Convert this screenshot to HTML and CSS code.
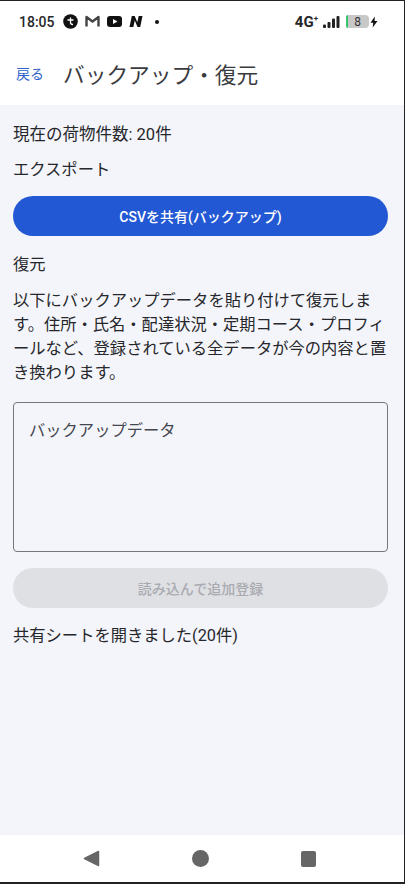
FILE: index.html
```html
<!DOCTYPE html>
<html lang="ja">
<head>
<meta charset="UTF-8">
<meta name="viewport" content="width=device-width, initial-scale=1.0">
<title>バックアップ・復元</title>
<link rel="stylesheet" href="styles.css">
</head>
<body>
<div class="phone">
<div class="status-bar">
<div class="status-left">
<span class="clock">18:05</span>
<svg class="st-icon" width="15" height="15" viewBox="0 0 15 15"><circle cx="7.500" cy="7.500" r="7.300" fill="#111"/><path d="M4.500 6h6M7.500 3.500v5q0 2 2.500 2" fill="none" stroke="#fff" stroke-width="1.300"/></svg>
<svg class="st-icon" width="15" height="13" viewBox="0 0 15 13"><path d="M1.500 11.500V2l6 4.500 6-4.500v9.500" fill="none" stroke="#444" stroke-width="2.400" stroke-linejoin="round"/></svg>
<svg class="st-icon" width="15" height="11" viewBox="0 0 15 11"><rect width="15" height="11" rx="3" fill="#111"/><path d="M6 3l4.500 2.500L6 8z" fill="#fff"/></svg>
<svg class="st-icon" width="14" height="13" viewBox="0 0 14 12"><path d="M.5 11.500 2.800.5h2.900L8.300 6.800 9.700.5H13.500L11.200 11.500H8.500L5.800 5 4.300 11.500z" fill="#111"/></svg>
<span class="dot"></span>
</div>
<div class="status-right">
<span class="net">4G<sup>+</sup></span>
<svg class="signal" width="17" height="12" viewBox="0 0 17 12" fill="#222"><rect x="0" y="8.500" width="3" height="3.500" rx="1"/><rect x="4.500" y="6" width="3" height="6" rx="1"/><rect x="9" y="2.500" width="3" height="9.500" rx="1"/><rect x="13.500" y="0" width="3" height="12" rx="1"/></svg>
<div class="battery"><span class="battery-level"></span><span class="battery-num">8</span></div>
<svg class="bolt" width="8" height="12" viewBox="0 0 8 11"><path d="M4.800 0 .5 6.200h2.700L2.700 11 7.500 4.500H4.600z" fill="#111"/></svg>
</div>
</div>

<div class="header">
<a class="back-link">戻る</a>
<h1 class="title">バックアップ・復元</h1>
</div>

<div class="content">
<p class="text count">現在の荷物件数: 20件</p>
<p class="text export-label">エクスポート</p>
<button class="btn btn-primary">CSVを共有(バックアップ)</button>
<p class="text restore-label">復元</p>
<p class="text desc">以下にバックアップデータを貼り付けて復元します。住所・氏名・配達状況・定期コース・プロフィールなど、登録されている全データが今の内容と置き換わります。</p>
<div class="data-box">バックアップデータ</div>
<button class="btn btn-disabled">読み込んで追加登録</button>
<p class="text result">共有シートを開きました(20件)</p>
</div>

<div class="nav-bar">
<svg width="17" height="17" viewBox="0 0 17 17"><path d="M15.500 1.500v14L1.500 8.500z" fill="#666" stroke="#666" stroke-width="1.500" stroke-linejoin="round"/></svg>
<span class="nav-home"></span>
<span class="nav-square"></span>
</div>
</div>
</body>
</html>
```

FILE: styles.css
```css
* {
    box-sizing: border-box;
}

html, body {
    margin: 0;
    padding: 0;
}

body {
    background: #fff;
    font-family: Roboto, "Noto Sans CJK JP", sans-serif;
    color: #26272b;
}

.phone {
    width: 405px;
    height: 884px;
    display: flex;
    flex-direction: column;
    border-top: 1px solid #222;
    border-right: 1px solid #222;
    border-bottom: 2px solid #222;
    overflow: hidden;
}

.status-bar {
    height: 41px;
    padding: 0 26px 0 19px;
    display: flex;
    justify-content: space-between;
    align-items: center;
    background: #fff;
}

.status-left, .status-right {
    display: flex;
    align-items: center;
}

.status-left {
    gap: 7px;
}

.clock {
    font-size: 14px;
    font-weight: 500;
    margin-right: 1px;
}

.dot {
    width: 4px;
    height: 4px;
    border-radius: 50%;
    background: #111;
    margin-left: 5px;
}

.net {
    font-size: 15px;
    font-weight: 700;
}

.net sup {
    font-size: 8px;
    line-height: 0;
}

.signal {
    margin-left: 5px;
}

.battery {
    width: 23px;
    height: 13px;
    margin-left: 6px;
    border-radius: 4px;
    background: #c8c8c8;
    position: relative;
    display: flex;
    justify-content: center;
    align-items: center;
    font-size: 12px;
    color: #333;
}

.battery-level {
    position: absolute;
    left: 0;
    top: 0;
    width: 2px;
    height: 13px;
    border-radius: 2px 0 0 2px;
    background: #35c66b;
}

.bolt {
    margin-left: 1px;
}

.header {
    height: 63px;
    padding: 0 16px 1px;
    display: flex;
    align-items: center;
    gap: 19px;
    background: #fff;
}

.back-link {
    font-size: 14px;
    color: #2f62c9;
}

.title {
    margin: 0;
    font-size: 21.700px;
    font-weight: 400;
    color: #3a3b40;
}

.content {
    flex: 1;
    background: #f4f5fa;
    padding: 18px 16px 0 13px;
}

.text {
    margin: 0;
    font-size: 16.300px;
    line-height: 24px;
}

.count {
    font-size: 16.500px;
}

.export-label {
    margin-top: 11px;
}

.btn {
    display: block;
    width: 100%;
    height: 40px;
    border: none;
    border-radius: 20px;
    font-family: inherit;
    font-size: 14px;
    font-weight: 500;
}

.btn-primary {
    margin-top: 14px;
    background: #2258d3;
    color: #fff;
}

.restore-label {
    margin-top: 17px;
}

.desc {
    margin-top: 12px;
}

.data-box {
    margin-top: 17px;
    height: 150px;
    border: 1px solid #75777f;
    border-radius: 4px;
    padding: 16px 15px;
    font-size: 16.300px;
    line-height: 24px;
    color: #44464f;
}

.btn-disabled {
    margin-top: 16px;
    background: #dfe0e4;
    color: #a9abb1;
}

.result {
    margin-top: 16px;
}

.nav-bar {
    height: 47px;
    background: #fff;
    display: flex;
    align-items: center;
    padding: 0 88px 0 83px;
    justify-content: space-between;
}

.nav-home {
    width: 17px;
    height: 17px;
    border-radius: 50%;
    background: #666;
}

.nav-square {
    width: 15px;
    height: 16px;
    border-radius: 2px;
    background: #666;
}
```
